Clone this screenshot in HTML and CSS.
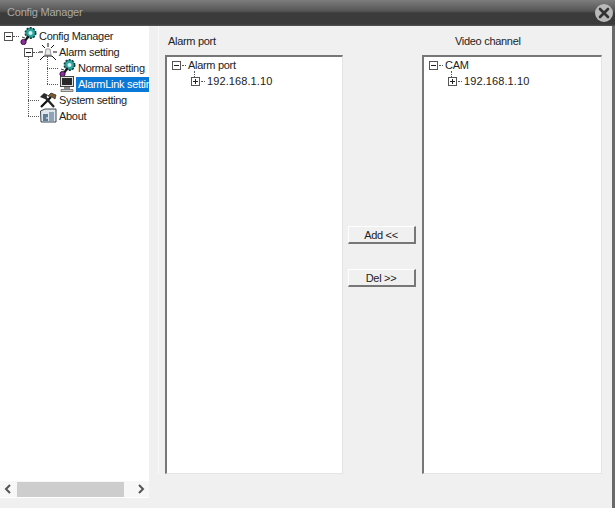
FILE: index.html
```html
<!DOCTYPE html>
<html lang="en">
<head>
<meta charset="utf-8">
<title>Config Manager</title>
<link rel="stylesheet" href="styles.css">
</head>
<body>
<div class="window">
  <header class="titlebar">
    <span class="title">Config Manager</span>
    <span class="close"><svg width="12" height="12" viewBox="0 0 12 12"><path d="M2 2L10 10M10 2L2 10" stroke="#333" stroke-width="2.6" stroke-linecap="round"/></svg></span>
  </header>
  <div class="body">
    <aside class="sidebar">
      <div class="tree">
        <i class="vline v-a"></i>
        <i class="vline v-b"></i>
        <div class="row lvl0">
          <span class="box"></span><span class="twig"></span>
          <svg class="ico" viewBox="0 0 18 18"><circle cx="11.5" cy="6" r="5.2" fill="#2a9c98" stroke="#123c40" stroke-width="1.6" stroke-dasharray="2 1.3"/><circle cx="11.5" cy="6" r="3.8" fill="#2fa6a0"/><circle cx="11.5" cy="6" r="2" fill="#d8f0ee"/><path d="M9.5 9L6 14" stroke="#1a1a1a" stroke-width="2.2"/><path d="M3 10l3 1" stroke="#444"/><circle cx="4.5" cy="15" r="2.6" fill="#8b2f9c" stroke="#3a1440"/></svg>
          <span class="label">Config Manager</span>
        </div>
        <div class="row lvl1">
          <span class="box"></span><span class="twig"></span>
          <svg class="ico" viewBox="0 0 18 18"><path d="M7 6h4l1 6H6z" fill="#e9e9e9" stroke="#888" stroke-width=".8"/><path d="M9 0v4M3 2l3 3M15 2l-3 3M0 9h4M14 9h4M1 17l4-4M17 17l-4-4M5 13h8" stroke="#111" stroke-width="1"/></svg>
          <span class="label">Alarm setting</span>
        </div>
        <div class="row lvl2">
          <span class="twig long"></span>
          <svg class="ico" viewBox="0 0 18 18"><circle cx="11.5" cy="6" r="5.2" fill="#2a9c98" stroke="#123c40" stroke-width="1.6" stroke-dasharray="2 1.3"/><circle cx="11.5" cy="6" r="3.8" fill="#2fa6a0"/><circle cx="11.5" cy="6" r="2" fill="#d8f0ee"/><path d="M9.5 9L6 14" stroke="#1a1a1a" stroke-width="2.2"/><path d="M3 10l3 1" stroke="#444"/><circle cx="4.5" cy="15" r="2.6" fill="#8b2f9c" stroke="#3a1440"/></svg>
          <span class="label">Normal setting</span>
        </div>
        <div class="row lvl2">
          <span class="twig long"></span>
          <svg class="ico" viewBox="0 0 18 18"><rect x="2.500" y="1.500" width="13" height="10" fill="#e2e2e2" stroke="#444"/><rect x="4" y="3" width="10" height="7" fill="#2a2a2a"/><path d="M6 12h6v2H6z" fill="#8a8a8a"/><path d="M3 14.500h12v2H3z" fill="#ccc" stroke="#555" stroke-width=".7"/></svg>
          <span class="label selected">AlarmLink setting</span>
        </div>
        <div class="row lvl1 leaf">
          <span class="twig long"></span>
          <svg class="ico" viewBox="0 0 18 18"><path d="M2 16L12 6" stroke="#111" stroke-width="2.300"/><path d="M15 16L6 6" stroke="#222" stroke-width="2.300"/><path d="M1 6L5 2L9 4L6 8z" fill="#2b2b2b"/><path d="M9 5L12 2L17 4L16 8L13 6z" fill="#7d5a2a" stroke="#222" stroke-width=".7"/></svg>
          <span class="label">System setting</span>
        </div>
        <div class="row lvl1 leaf">
          <span class="twig long"></span>
          <svg class="ico" viewBox="0 0 18 18"><path d="M1.500 4L6 2H17V15H2z" fill="#dfe6ec" stroke="#3d4650"/><rect x="4" y="7" width="5" height="7" fill="#5f7c98"/><rect x="10" y="5" width="5" height="9" fill="#8ba4ba"/><path d="M7 11h2" stroke="#fff"/></svg>
          <span class="label">About</span>
        </div>
      </div>
      <div class="hscroll">
        <svg class="chev" viewBox="0 0 8 10"><path d="M6 1L2 5L6 9" fill="none" stroke="#555" stroke-width="2"/></svg>
        <span class="track"><span class="thumb"></span></span>
        <svg class="chev" viewBox="0 0 8 10"><path d="M2 1L6 5L2 9" fill="none" stroke="#555" stroke-width="2"/></svg>
      </div>
    </aside>
    <main class="main">
      <section class="col">
        <div class="caption cap-left">Alarm port</div>
        <div class="list">
          <i class="vdot"></i>
          <div class="node"><span class="box"></span><span class="twig short"></span><span class="label">Alarm port</span></div>
          <div class="node sub"><span class="box plus"></span><span class="twig short"></span><span class="label ip">192.168.1.10</span></div>
        </div>
      </section>
      <section class="actions">
        <button class="btn">Add &lt;&lt;</button>
        <button class="btn">Del &gt;&gt;</button>
      </section>
      <section class="col">
        <div class="caption cap-right">Video channel</div>
        <div class="list">
          <i class="vdot"></i>
          <div class="node"><span class="box"></span><span class="twig short"></span><span class="label">CAM</span></div>
          <div class="node sub"><span class="box plus"></span><span class="twig short"></span><span class="label ip">192.168.1.10</span></div>
        </div>
      </section>
    </main>
  </div>
</div>
</body>
</html>
```
FILE: styles.css
```css
* { box-sizing: border-box; }
html, body { margin: 0; padding: 0; }
body {
  width: 615px;
  height: 508px;
  overflow: hidden;
  font-family: "Liberation Sans", Arial, sans-serif;
  font-size: 11px;
  letter-spacing: -0.3px;
  color: #222;
  background: #f0f0f0;
}
.window {
  width: 615px;
  height: 508px;
  display: flex;
  flex-direction: column;
  border-right: 3px solid #6a6a6a;
}
.titlebar {
  height: 26px;
  flex: none;
  display: flex;
  align-items: center;
  justify-content: space-between;
  padding: 0 0 2px 7px;
  margin-right: -3px;
  background: linear-gradient(#7d7d7d 0, #555 11px, #3b3b3b 13px, #3a3a3a 24px, #555 26px);
}
.title { color: #aaa; letter-spacing: -0.2px; }
.close {
  width: 18px;
  height: 18px;
  margin-right: 2px;
  margin-top: 2px;
  border-radius: 50%;
  background: #b9b9b9;
  display: flex;
  align-items: center;
  justify-content: center;
}
.body { flex: 1; display: flex; min-height: 0; }
.sidebar {
  width: 149px;
  height: 472px;
  flex: none;
  background: #fff;
  display: flex;
  flex-direction: column;
}
.tree { position: relative; flex: 1; padding-top: 2px; }
.vline { position: absolute; width: 0; border-left: 1px dotted #555; }
.v-a { left: 28px; top: 31px; height: 59px; }
.v-b { left: 47px; top: 30px; height: 28px; }
.row { display: flex; align-items: center; height: 16px; }
.lvl0 { padding-left: 4px; }
.lvl1 { padding-left: 24px; }
.lvl1.leaf { padding-left: 28px; }
.lvl2 { padding-left: 47px; }
.box {
  width: 9px;
  height: 9px;
  flex: none;
  border: 1px solid #555;
  background: linear-gradient(#222, #222) center / 5px 1px no-repeat #fff;
}
.box.plus {
  background:
    linear-gradient(#222, #222) center / 5px 1px no-repeat,
    linear-gradient(#222, #222) center / 1px 5px no-repeat,
    #fff;
}
.twig { width: 6px; height: 0; flex: none; border-top: 1px dotted #555; }
.twig.long { width: 11px; }
.twig.short { width: 4px; margin-left: 1px; margin-right: 1px; }
.ico { width: 18px; height: 18px; flex: none; }
.label { padding-left: 2px; white-space: nowrap; line-height: 15px; }
.ip { letter-spacing: 0.1px; }
.selected {
  background: #0a78d7;
  color: #fff;
  flex: 1;
  min-width: 0;
  overflow: hidden;
}
.hscroll {
  height: 16px;
  flex: none;
  margin-bottom: 1px;
  display: flex;
  align-items: center;
  background: #f7f7f7;
  padding: 0 4px;
}
.chev { width: 8px; height: 10px; flex: none; }
.track { flex: 1; height: 15px; padding: 0 13px 0 5px; }
.thumb { display: block; height: 100%; background: #cdcdcd; }
.main {
  flex: 1;
  margin-left: 9px;
  border-left: 1px solid #fafafa;
  padding: 0 10px 0 6px;
  display: grid;
  grid-template-columns: 178px 1fr 180px;
  height: 448px;
}
.col { display: flex; flex-direction: column; min-width: 0; }
.caption { height: 29px; padding-top: 8px; line-height: 15px; }
.cap-left { padding-left: 3px; }
.cap-right { padding-left: 33px; }
.list {
  flex: 1;
  position: relative;
  background: #fff;
  border-style: solid;
  border-width: 2px 1px 1px 2px;
  border-color: #777 #e4e4e4 #e4e4e4 #777;
  padding-left: 5px;
}
.vdot { position: absolute; left: 27px; top: 14px; height: 6px; border-left: 1px dotted #555; }
.node { display: flex; align-items: center; height: 16px; }
.node .label { padding-left: 1px; }
.node.sub { padding-left: 19px; }
.actions {
  display: flex;
  flex-direction: column;
  align-items: center;
  gap: 25px;
  padding: 200px 2px 0 0;
}
.btn {
  width: 68px;
  height: 18px;
  padding: 0;
  font: inherit;
  letter-spacing: inherit;
  color: #222;
  background: #f0f0f0;
  border-style: solid;
  border-width: 1px 2px 2px 1px;
  border-color: #fff #777 #777 #fff;
  border-radius: 0;
}
```
